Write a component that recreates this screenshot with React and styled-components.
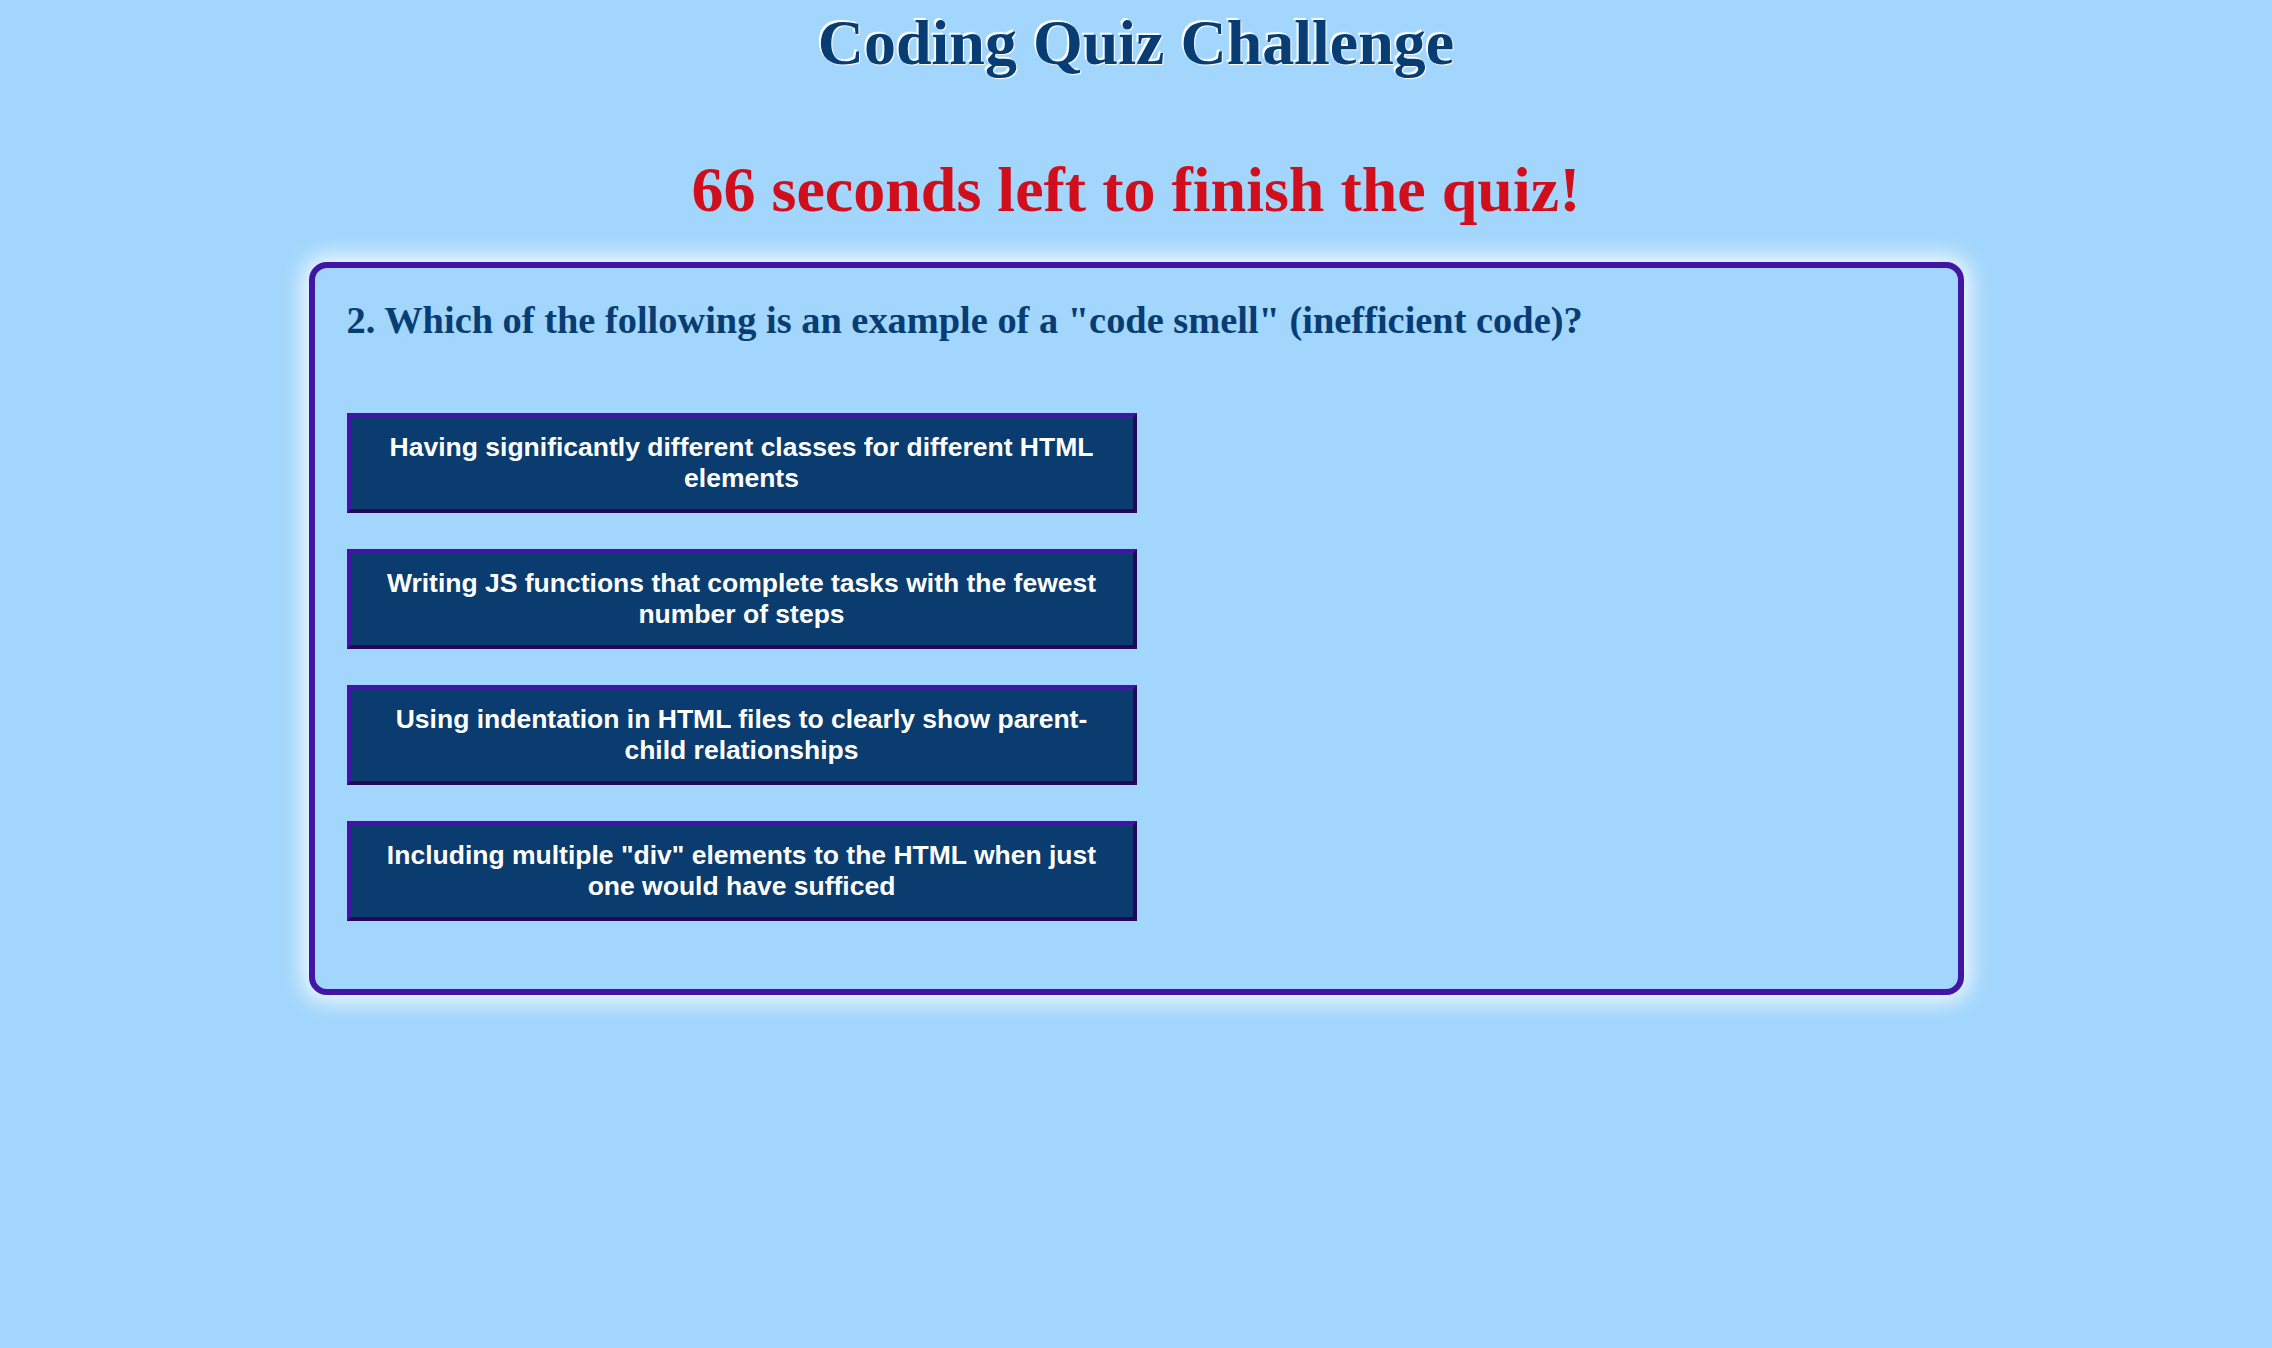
import React from 'react';
import styled, { createGlobalStyle } from 'styled-components';

const question = {
    number: 2,
    text: 'Which of the following is an example of a "code smell" (inefficient code)?',
    choices: [
        'Having significantly different classes for different HTML elements',
        'Writing JS functions that complete tasks with the fewest number of steps',
        'Using indentation in HTML files to clearly show parent-child relationships',
        'Including multiple "div" elements to the HTML when just one would have sufficed',
    ],
}

const App = () => {
    const secondsLeft = 66

    return (
        <Page>
            <GlobalStyle />
            <Title>Coding Quiz Challenge</Title>
            <Timer>{secondsLeft} seconds left to finish the quiz!</Timer>
            <QuizCard>
                <Question>{question.number}. {question.text}</Question>
                <Choices>
                    {question.choices.map(choice => (
                        <Choice key={choice}>{choice}</Choice>
                    ))}
                </Choices>
            </QuizCard>
        </Page>
    )
}

export default App;

const GlobalStyle = createGlobalStyle`
html, body {
    margin: 0;
    padding: 0;
    background-color: #a2d6fc;
    min-height: 100%;
}
body {
    font-family: "Liberation Serif", "Times New Roman", serif;
}
`

const Page = styled.div`
display: flex;
flex-direction: column;
align-items: center;
min-height: 1348px;
padding-top: 7px;
box-sizing: border-box;
`

const Title = styled.h1`
margin: 0;
font-family: "Liberation Serif", "Times New Roman", serif;
font-size: 64px;
font-weight: 700;
line-height: 71px;
color: #083d73;
text-shadow: -2px -2px 1px #ffffff, 1px 1px 1px #ffffff;
`

const Timer = styled.h2`
margin: 76px 0 0;
font-family: "Liberation Serif", "Times New Roman", serif;
font-size: 64px;
font-weight: 700;
line-height: 71px;
color: #d10f1c;
`

const QuizCard = styled.div`
box-sizing: border-box;
width: 1655px;
margin-top: 37px;
padding: 31px 32px 32px;
border: 6px solid #4315a6;
border-radius: 18px;
box-shadow: 0 0 22px 6px rgba(255, 255, 255, 0.9);
`

const Question = styled.h3`
margin: 0 0 71px;
font-family: "Liberation Serif", "Times New Roman", serif;
font-size: 38.4px;
font-weight: 700;
line-height: 42.5px;
color: #083d73;
`

const Choices = styled.div`
display: flex;
flex-direction: column;
align-items: flex-start;
gap: 36px;
margin-bottom: 36px;
`

const Choice = styled.button`
box-sizing: border-box;
width: 790px;
min-height: 100px;
padding: 15px 20px;
background-color: #0a3c70;
border-style: solid;
border-width: 4px;
border-color: #4315a6 #22075a #22075a #4315a6;
color: #ffffff;
font-family: "Liberation Sans", Arial, sans-serif;
font-size: 26.5px;
font-weight: 700;
line-height: 30.4px;
text-align: center;
cursor: pointer;

&:hover {
    background-color: #4315a6;
}
`
